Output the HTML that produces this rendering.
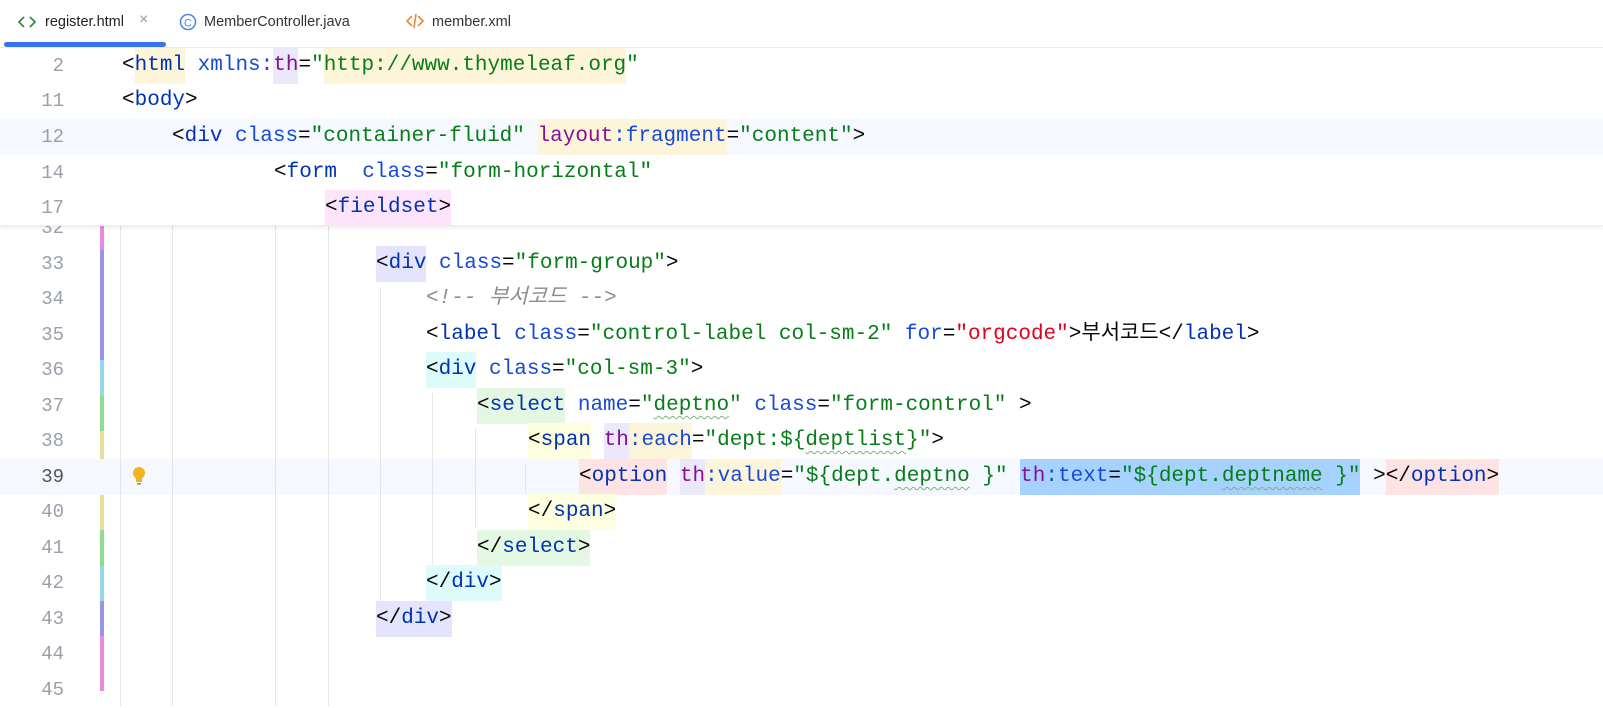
<!DOCTYPE html>
<html><head><meta charset="utf-8"><style>
*{margin:0;padding:0;box-sizing:border-box}
body{width:1603px;height:701px;overflow:hidden;background:#fff;position:relative;font-family:"Liberation Mono","Noto Sans CJK KR",monospace;font-size:21px}
.tab{position:absolute;top:14px;font-family:"Liberation Sans","Noto Sans CJK KR",sans-serif;font-size:14.5px;color:#222;white-space:nowrap}
.ln{position:absolute;left:0;width:64px;text-align:right;color:#9a9fa8;font-size:19px;height:36px;line-height:36px}
.l{position:absolute;height:36px;line-height:36px;white-space:pre;color:#080808}
.l span{display:inline-block;height:36px}
.t{color:#0033b3}.a{color:#174ad4}.v{color:#067d17}.p{color:#871094}.c{color:#8c8c8c;font-style:italic}.r{color:#e0001b}
.by{background:#fcf5da}.bl{background:#ebe8fa}.bp{background:#fde4fb}.bd{background:#e4e4fc}.bc{background:#ddfbfb}.bg{background:#e3f7e3}.bs{background:#fdfde0}.br{background:#fde3e3}.sel{background:#a6d2ff}
.g{position:absolute;width:1px;background:#e6e6e6}
.st{position:absolute;left:100px;width:4px}
.w{text-decoration:underline wavy #7cb37c;text-decoration-thickness:1px;text-underline-offset:5px}
</style></head><body>
<!-- tabs -->
<div style="position:absolute;left:0;top:0;width:1603px;height:48px;background:#fff;border-bottom:1px solid #ebecf0"></div>
<svg style="position:absolute;left:18px;top:15px" width="18" height="14" viewBox="0 0 18 14"><path d="M6 2 L1 7 L6 12 M12 2 L17 7 L12 12" stroke="#3a8a45" stroke-width="1.8" fill="none"/></svg>
<div class="tab" style="left:45px">register.html</div>
<div class="tab" style="left:139px;color:#999;font-size:16px;top:11px">×</div>
<svg style="position:absolute;left:179px;top:13px" width="18" height="18"><circle cx="9" cy="9" r="7.5" fill="none" stroke="#4a86e8" stroke-width="1.5"/><text x="9" y="13.5" font-size="11" text-anchor="middle" fill="#4a86e8" font-family="Liberation Sans">C</text></svg>
<div class="tab" style="left:204px;color:#333">MemberController.java</div>
<svg style="position:absolute;left:406px;top:13px" width="18" height="16"><path d="M6 3 L1 8 L6 13 M12 3 L17 8 L12 13 M10 1 L8 15" stroke="#e8873a" stroke-width="1.6" fill="none"/></svg>
<div class="tab" style="left:432px;color:#333">member.xml</div>
<div style="position:absolute;left:4px;top:42px;width:162px;height:5px;border-radius:3px;background:#3574f0"></div>

<!-- stripes & guides -->
<div class="st" style="top:226px;height:24px;background:#e88ae0"></div>
<div class="st" style="top:250px;height:110px;background:#9a94e8"></div>
<div class="st" style="top:360px;height:36px;background:#95d8e8"></div>
<div class="st" style="top:396px;height:35px;background:#8fdc8f"></div>
<div class="st" style="top:431px;height:29px;background:#e8e09a"></div>
<div class="st" style="top:460px;height:35px;background:#e89a9a"></div>
<div class="st" style="top:495px;height:35px;background:#e8e09a"></div>
<div class="st" style="top:530px;height:36px;background:#8fdc8f"></div>
<div class="st" style="top:566px;height:35px;background:#95d8e8"></div>
<div class="st" style="top:601px;height:35px;background:#9a94e8"></div>
<div class="st" style="top:636px;height:55px;background:#e88ae0"></div>
<div style="position:absolute;left:0;top:459px;width:1603px;height:36px;background:#f5f8fe"></div>
<div class="g" style="left:120px;top:226px;height:480px"></div>
<div class="g" style="left:172px;top:226px;height:480px"></div>
<div class="g" style="left:275px;top:226px;height:480px"></div>
<div class="g" style="left:328px;top:226px;height:480px"></div>
<div class="g" style="left:380px;top:287px;height:320px"></div>
<div class="g" style="left:432px;top:393px;height:180px"></div>
<div class="g" style="left:475px;top:428px;height:100px"></div>
<div class="g" style="left:525px;top:464px;height:30px"></div>

<!-- code lines -->
<div class="ln" style="top:210px">32</div>
<div class="ln" style="top:246px">33</div><div class="l" style="left:376px;top:246px"><span class="bd">&lt;<span class="t">div</span></span> <span class="a">class</span>=<span class="v">"form-group"</span>&gt;</div>
<div class="ln" style="top:281px">34</div><div class="l c" style="left:426px;top:281px">&lt;!-- 부서코드 --&gt;</div>
<div class="ln" style="top:317px">35</div><div class="l" style="left:426px;top:317px">&lt;<span class="t">label</span> <span class="a">class</span>=<span class="v">"control-label col-sm-2"</span> <span class="a">for</span>=<span class="r">"orgcode"</span>&gt;부서코드&lt;/<span class="t">label</span>&gt;</div>
<div class="ln" style="top:352px">36</div><div class="l" style="left:426px;top:352px"><span class="bc">&lt;<span class="t">div</span></span> <span class="a">class</span>=<span class="v">"col-sm-3"</span>&gt;</div>
<div class="ln" style="top:388px">37</div><div class="l" style="left:477px;top:388px"><span class="bg">&lt;<span class="t">select</span></span> <span class="a">name</span>=<span class="v">"<span class="w">deptno</span>"</span> <span class="a">class</span>=<span class="v">"form-control"</span> &gt;</div>
<div class="ln" style="top:423px">38</div><div class="l" style="left:528px;top:423px"><span class="bs">&lt;<span class="t">span</span></span> <span class="bl p">th</span><span class="by a">:each</span>=<span class="v">"dept:${<span class="w">deptlist</span>}"</span>&gt;</div>
<div class="ln" style="top:459px;color:#555">39</div><div class="l" style="left:579px;top:459px"><span class="br">&lt;<span class="t">option</span></span> <span class="bl p">th</span><span class="by a">:value</span>=<span class="v">"${dept.<span class="w">deptno</span> }"</span> <span class="sel"><span class="p">th</span><span class="a">:text</span>=<span class="v">"${dept.<span class="w">deptname</span> }"</span></span> &gt;<span class="br">&lt;/<span class="t">option</span>&gt;</span></div>
<svg style="position:absolute;left:132px;top:466px" width="14" height="20"><circle cx="7" cy="7" r="6" fill="#f2b320"/><rect x="4" y="12" width="6" height="4" fill="#f2b320"/><rect x="5" y="17" width="4" height="1.5" fill="#b0861a"/></svg>
<div class="ln" style="top:494px">40</div><div class="l" style="left:528px;top:494px"><span class="bs">&lt;/<span class="t">span</span>&gt;</span></div>
<div class="ln" style="top:530px">41</div><div class="l" style="left:477px;top:530px"><span class="bg">&lt;/<span class="t">select</span>&gt;</span></div>
<div class="ln" style="top:565px">42</div><div class="l" style="left:426px;top:565px"><span class="bc">&lt;/<span class="t">div</span>&gt;</span></div>
<div class="ln" style="top:601px">43</div><div class="l" style="left:376px;top:601px"><span class="bd">&lt;/<span class="t">div</span>&gt;</span></div>
<div class="ln" style="top:636px">44</div>
<div class="ln" style="top:672px">45</div>

<!-- sticky header -->
<div style="position:absolute;left:0;top:48px;width:1603px;height:178px;background:#fff;box-shadow:0 2px 4px rgba(0,0,0,0.08);border-bottom:1px solid #eceef2">
<div style="position:absolute;left:0;top:71px;width:1603px;height:36px;background:#f5f8fe"></div>
<div class="ln" style="top:0">2</div><div class="l" style="left:122px;top:0">&lt;<span class="by t">html</span> <span class="a">xmlns:</span><span class="bl p">th</span>=<span class="v">"</span><span class="by v">http://www.thymeleaf.org</span><span class="v">"</span></div>
<div class="ln" style="top:35px">11</div><div class="l" style="left:122px;top:35px">&lt;<span class="t">body</span>&gt;</div>
<div class="ln" style="top:71px">12</div><div class="l" style="left:172px;top:71px">&lt;<span class="t">div</span> <span class="a">class</span>=<span class="v">"container-fluid"</span> <span class="by"><span class="p">layout</span><span class="a">:fragment</span></span>=<span class="v">"content"</span>&gt;</div>
<div class="ln" style="top:107px">14</div><div class="l" style="left:274px;top:107px">&lt;<span class="t">form</span>  <span class="a">class</span>=<span class="v">"form-horizontal"</span></div>
<div class="ln" style="top:142px">17</div><div class="l" style="left:325px;top:142px"><span class="bp">&lt;<span class="t">fieldset</span>&gt;</span></div>
</div>
</body></html>
